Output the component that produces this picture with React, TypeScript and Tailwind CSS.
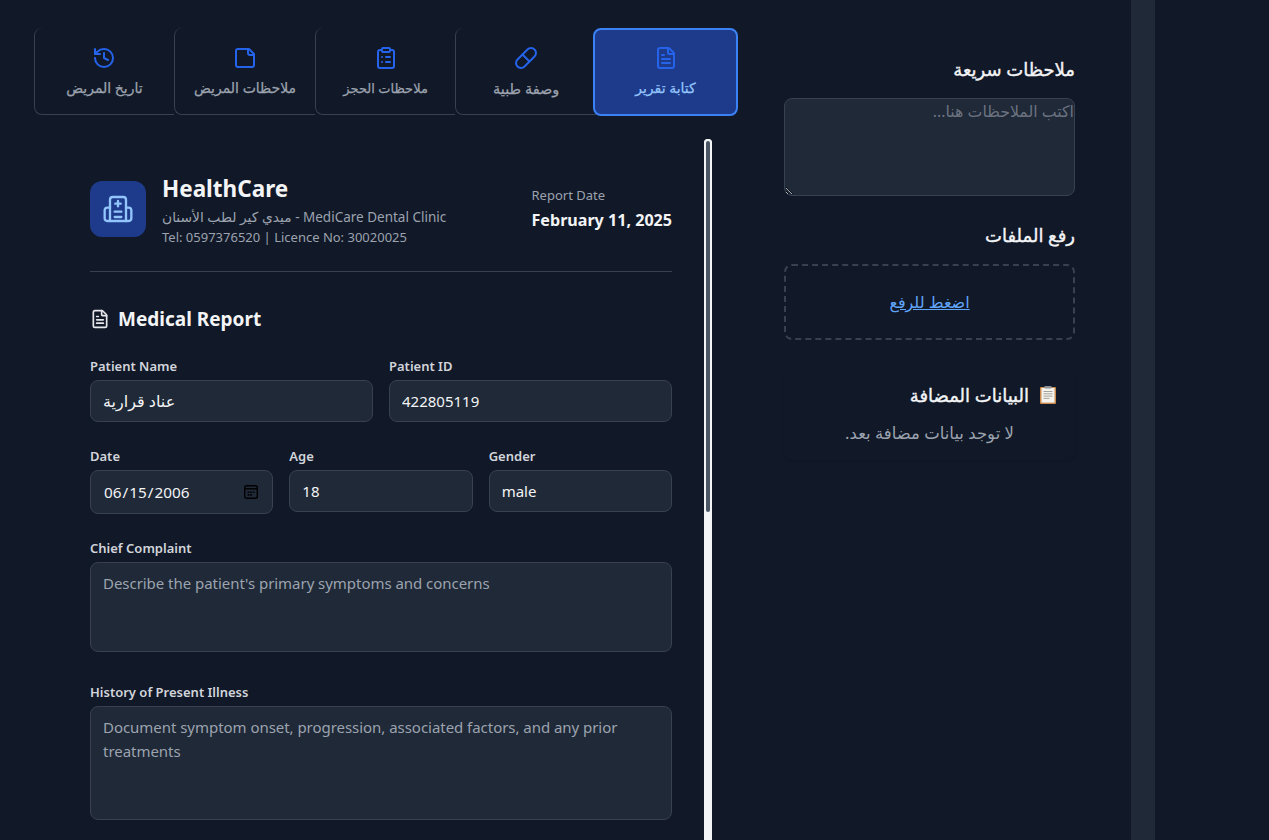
import React from "react";
import { History, ClipboardList, Pill, FileText } from "lucide-react";

function NoteIcon({ size = 24, color = "currentColor" }: { size?: number; color?: string }) {
  return (
    <svg width={size} height={size} viewBox="0 0 24 24" fill="none" stroke={color} strokeWidth={2} strokeLinecap="round" strokeLinejoin="round">
      <path d="M5 3h11l5 5v11a2 2 0 0 1-2 2H5a2 2 0 0 1-2-2V5a2 2 0 0 1 2-2z" />
      <path d="M15 3v4a2 2 0 0 0 2 2h4" />
    </svg>
  );
}

function HospitalIcon() {
  return (
    <svg width={32} height={32} viewBox="0 0 24 24" fill="none" stroke="#93c5fd" strokeWidth={1.75} strokeLinecap="round" strokeLinejoin="round">
      <path d="M12 6v4" />
      <path d="M10 8h4" />
      <path d="M9.5 14h5" />
      <path d="M9.5 18h5" />
      <path d="M18 11h2a2 2 0 0 1 2 2v6a2 2 0 0 1-2 2H4a2 2 0 0 1-2-2v-6a2 2 0 0 1 2-2h2" />
      <path d="M18 21V5a2 2 0 0 0-2-2H8a2 2 0 0 0-2 2v16" />
    </svg>
  );
}

function CalendarIcon() {
  return (
    <svg width={14} height={14} viewBox="0 0 14 14" fill="none" className="pointer-events-none absolute right-[15px] top-[15px]">
      <rect x="0.7" y="0.7" width="12.6" height="12.6" rx="1.8" stroke="#000000" strokeWidth="1.4" />
      <path d="M0.7 3.8h12.6" stroke="#000000" strokeWidth="1.4" />
      <path d="M3.6 6.4h1.7v1.7H3.6zM6.2 6.4h1.7v1.7H6.2zM8.8 6.4h1.7v1.7H8.8zM3.6 9.1h1.7v1.7H3.6zM6.2 9.1h1.7v1.7H6.2z" fill="#000000" />
    </svg>
  );
}

function ClipboardEmoji() {
  return (
    <svg width={18} height={18} viewBox="0 0 18 18" className="flex-none" role="img" aria-label="📋">
      <rect x="1" y="1" width="16" height="17" rx="1" fill="#c98a4e" />
      <rect x="2.5" y="2" width="13" height="14.6" fill="#f5f3ee" />
      <path d="M4.5 5.5h9M4.5 7.8h9M4.5 10.1h9M4.5 12.4h6" stroke="#9a9a96" strokeWidth="0.9" />
      <rect x="5.5" y="0" width="7" height="2.4" rx="0.6" fill="#8d9196" />
    </svg>
  );
}

const tabs = [
  { label: "كتابة تقرير", Icon: FileText, active: true, size: "text-[14px]" },
  { label: "وصفة طبية", Icon: Pill, size: "text-[14.5px]" },
  { label: "ملاحظات الحجز", Icon: ClipboardList, size: "text-[13px]" },
  { label: "ملاحظات المريض", Icon: NoteIcon, size: "text-[14px]" },
  { label: "تاريخ المريض", Icon: History, size: "text-[14px]" },
];

const inputCls =
  "w-full h-[42px] rounded-lg border border-[#374151] bg-[#1f2937] px-[12px] text-[15px] text-[#f3f4f6] outline-none";
const areaCls =
  "block w-full rounded-lg border border-[#374151] bg-[#1f2937] px-[12px] py-[8px] text-[15px] tracking-[-0.04px] leading-6 text-[#f3f4f6] outline-none resize-none placeholder:text-[#9ca3af]";
const headCls = "text-[18px] leading-6 font-normal text-[#f3f4f6] [-webkit-text-stroke:0.4px_#f3f4f6]";

function Label({ children }: { children: React.ReactNode }) {
  return <label className="mb-1 block text-[13px] leading-5 font-semibold text-[#d1d5db]">{children}</label>;
}

export default function App() {
  return (
    <div className="flex h-[840px] overflow-hidden bg-[#111827] font-['Noto_Sans','DejaVu_Sans',sans-serif]">
      <div className="flex w-[1131px] flex-none gap-[46px] pl-[34px] pt-[28px]">
        <div className="flex w-[704px] flex-none flex-col">
          <div dir="rtl" className="flex h-[88px] flex-none items-start">
            {tabs.map(({ label, Icon, active, size }) =>
              active ? (
                <div
                  key={label}
                  className={"relative z-10 -ml-[3px] flex h-[88px] w-[145px] flex-none flex-col items-center rounded-lg border-2 border-[#3b82f6] bg-[#1e3a8a] pt-[16px] font-normal text-[#93c5fd] [-webkit-text-stroke:0.25px_#93c5fd] " + size}
                >
                  <Icon size={24} color="#2563eb" />
                  <span className="mt-[8px] leading-5">{label}</span>
                </div>
              ) : (
                <div
                  key={label}
                  className={"flex h-[87px] w-[140.6px] flex-none flex-col items-center rounded-lg rounded-r-none border-b border-b-[#374151] border-l border-l-[#374151] pt-[18px] font-normal text-[#9ca3af] [-webkit-text-stroke:0.25px_#9ca3af] " + size}
                >
                  <Icon size={24} color="#2563eb" />
                  <span className="mt-[8px] leading-5">{label}</span>
                </div>
              )
            )}
          </div>
          <div className="mt-[23px] mr-[26px] flex min-h-0 flex-1">
            <div className="min-w-0 flex-1 overflow-hidden pl-[56px] pr-[32px] pt-[42px]">
              <div className="flex items-start justify-between border-b border-[#374151] pb-[24px]">
                <div className="flex gap-4">
                  <div className="flex h-14 w-14 flex-none items-center justify-center rounded-xl bg-[#1e3a8a]">
                    <HospitalIcon />
                  </div>
                  <div className="-mt-[8px]">
                    <div className="text-[22.5px] leading-8 font-bold text-[#f3f4f6]">HealthCare</div>
                    <div className="mt-[2px] text-[13.8px] leading-5 text-[#9ca3af]">ميدي كير لطب الأسنان <span className="text-[13.5px]">- MediCare Dental Clinic</span></div>
                    <div className="text-[13px] leading-5 text-[#9ca3af]">Tel: 0597376520 | Licence No: 30020025</div>
                  </div>
                </div>
                <div className="pt-[4px]">
                  <div className="text-[13px] leading-5 text-[#9ca3af]">Report Date</div>
                  <div className="mt-[3px] text-[16.1px] leading-6 font-bold text-[#f3f4f6]">February 11, 2025</div>
                </div>
              </div>
              <div className="mt-[33px] flex items-center gap-2 text-[#e5e7eb]">
                <FileText size={20} strokeWidth={2} />
                <div className="text-[19px] leading-7 font-bold text-[#f3f4f6]">Medical Report</div>
              </div>
              <div className="mt-[23px] grid grid-cols-2 gap-4">
                <div>
                  <Label>Patient Name</Label>
                  <input readOnly value="عناد قرارية" className={inputCls + " text-[16px]"} />
                </div>
                <div>
                  <Label>Patient ID</Label>
                  <input readOnly value="422805119" className={inputCls} />
                </div>
              </div>
              <div className="mt-[24px] grid grid-cols-3 items-start gap-4">
                <div>
                  <Label>Date</Label>
                  <div className="relative">
                    <input
                      type="date"
                      defaultValue="2006-06-15"
                      className="h-[44px] w-full rounded-lg border border-[#374151] bg-[#1f2937] px-[12px] text-[15.3px] text-[#f3f4f6] outline-none [&::-webkit-calendar-picker-indicator]:opacity-0"
                    />
                    <CalendarIcon />
                  </div>
                </div>
                <div>
                  <Label>Age</Label>
                  <input readOnly value="18" className={inputCls} />
                </div>
                <div>
                  <Label>Gender</Label>
                  <input readOnly value="male" className={inputCls} />
                </div>
              </div>
              <div className="mt-[24px]">
                <Label>Chief Complaint</Label>
                <textarea readOnly className={areaCls + " h-[90px]"} placeholder="Describe the patient's primary symptoms and concerns" />
              </div>
              <div className="mt-[30px]">
                <Label>History of Present Illness</Label>
                <textarea readOnly className={areaCls + " h-[114px]"} placeholder="Document symptom onset, progression, associated factors, and any prior treatments" />
              </div>
            </div>
            <div className="w-2 flex-none rounded-t-full bg-[#f3f4f6]">
              <div className="h-[375px] rounded-full border-2 border-[#f3f4f6] bg-[#4b5563]" />
            </div>
          </div>
        </div>
        <div dir="rtl" className="w-[291px] flex-none pt-[29px]">
          <h3 className={headCls}>ملاحظات سريعة</h3>
          <textarea readOnly placeholder="اكتب الملاحظات هنا..." className="mt-[17px] block h-[98px] w-full rounded-lg border border-[#374151] bg-[#1f2937] text-[15.8px] leading-6 text-[#f3f4f6] outline-none placeholder:text-[#6b7280]" />
          <h3 className={"mt-[27px] " + headCls}>رفع الملفات</h3>
          <div className="mt-[17px] flex h-[76px] items-center justify-center rounded-lg border-2 border-dashed border-[#374151]">
            <a className="text-[16px] text-[#60a5fa] underline">اضغط للرفع</a>
          </div>
          <div className="mt-[31px] h-[89px] rounded-lg px-[18px] pt-[12px] shadow-[0_1px_2px_rgba(0,0,0,0.15)]">
            <h3 className={"flex items-center gap-[10px] " + headCls}>
              <ClipboardEmoji />
              <span>البيانات المضافة</span>
            </h3>
            <p className="mt-[14px] text-center text-[16.5px] leading-6 text-[#9ca3af]">لا توجد بيانات مضافة بعد.</p>
          </div>
        </div>
      </div>
      <div className="w-[24px] flex-none bg-[#1f2937]" />
      <div className="flex-1" />
    </div>
  );
}
